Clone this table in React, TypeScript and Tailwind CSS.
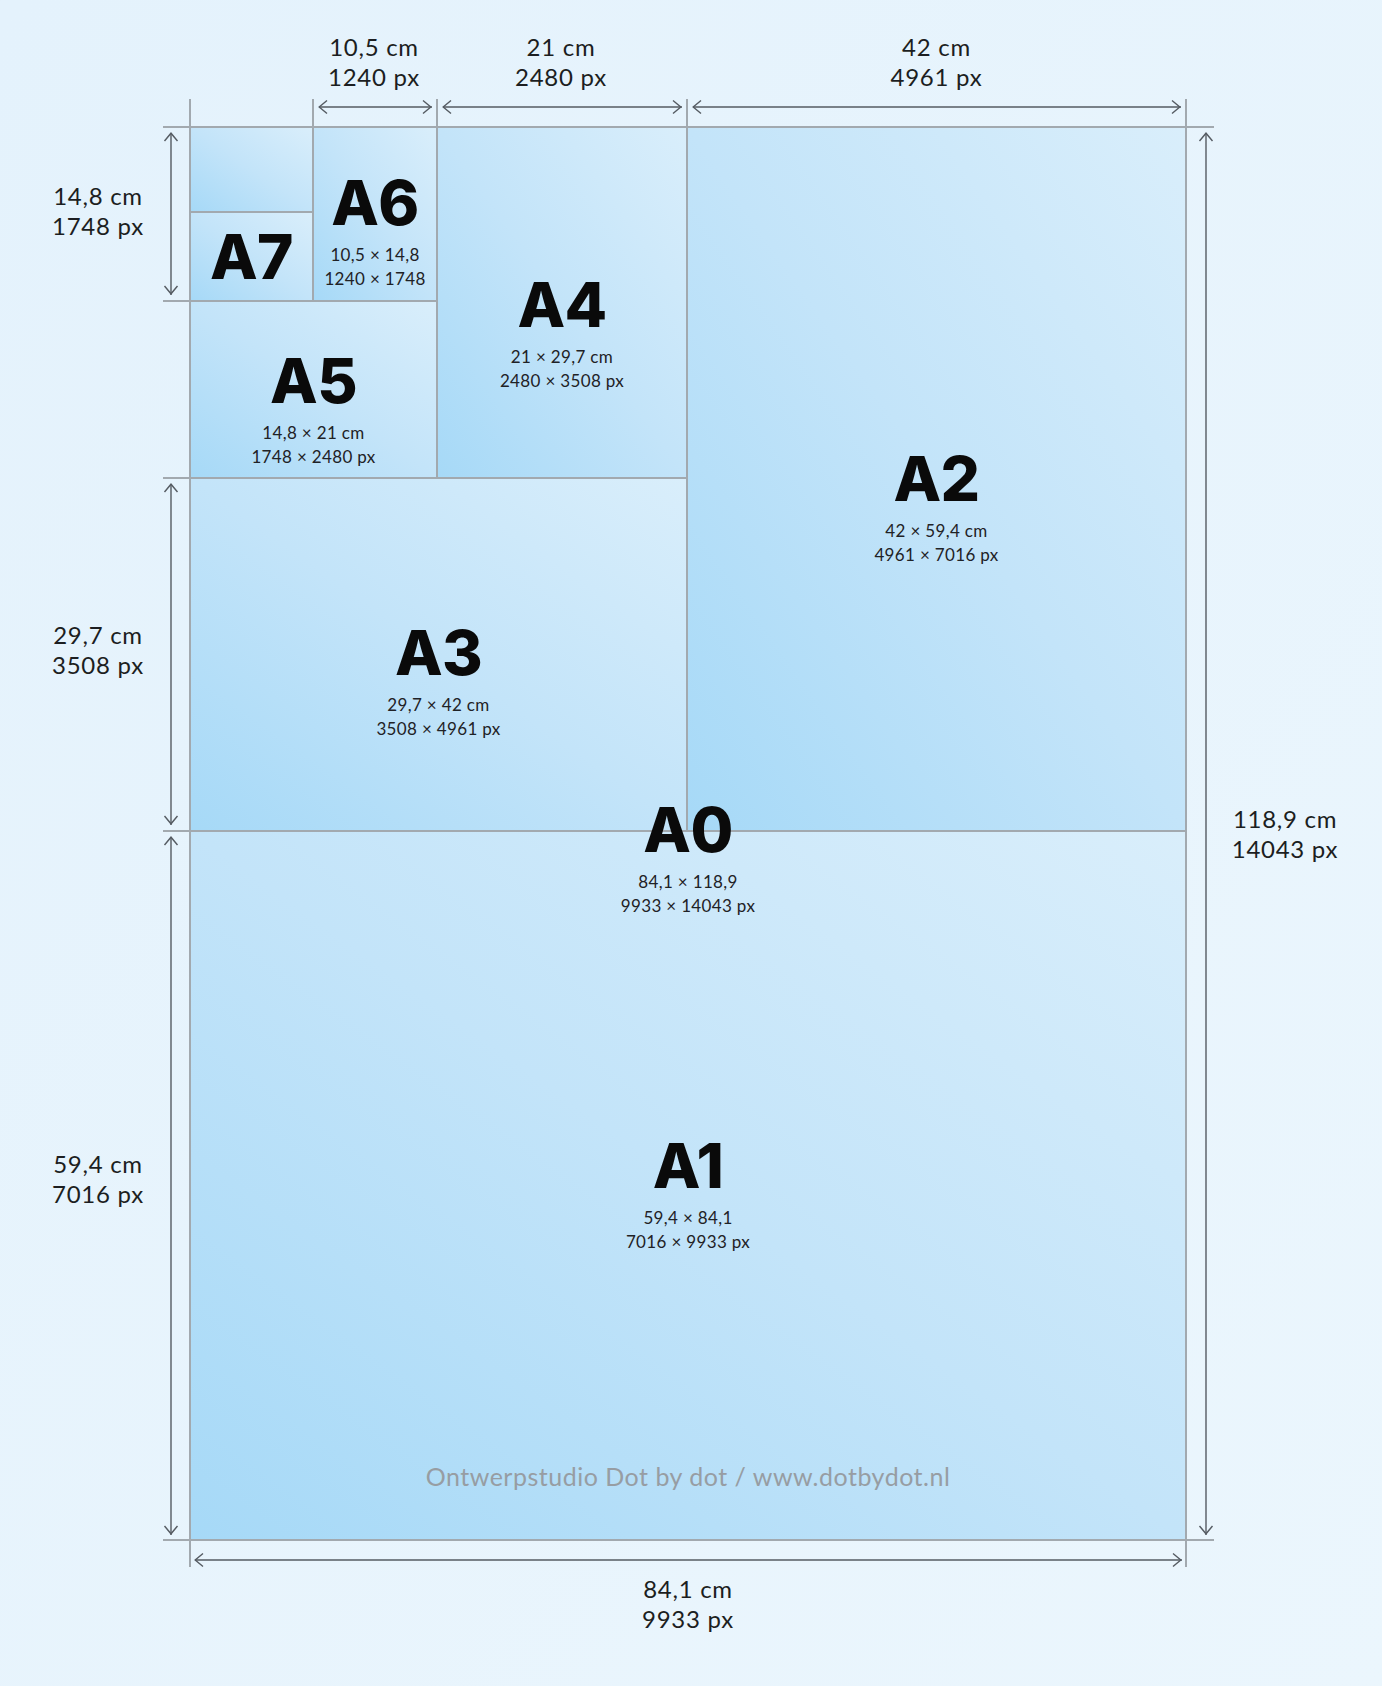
import type { ReactNode } from "react"

// A-series paper sizes chart

const ARROW = "#555b62"

function HArrow() {
  return (
    <svg className="block h-[16px] w-full overflow-visible">
      <line x1="1" y1="8" x2="100%" y2="8" stroke={ARROW} strokeWidth="1.4" />
      <polyline points="9,1.5 1.2,8 9,14.5" fill="none" stroke={ARROW} strokeWidth="1.4" />
      <svg x="100%" y="0" overflow="visible">
        <polyline points="-9,1.5 -1.2,8 -9,14.5" fill="none" stroke={ARROW} strokeWidth="1.4" />
      </svg>
    </svg>
  )
}

function VArrow() {
  return (
    <svg className="block min-h-0 w-[16px] flex-1 overflow-visible">
      <line x1="8" y1="1" x2="8" y2="100%" stroke={ARROW} strokeWidth="1.4" />
      <polyline points="1.5,9 8,1.2 14.5,9" fill="none" stroke={ARROW} strokeWidth="1.4" />
      <svg x="0" y="100%" overflow="visible">
        <polyline points="1.5,-9 8,-1.2 14.5,-9" fill="none" stroke={ARROW} strokeWidth="1.4" />
      </svg>
    </svg>
  )
}

function Label({ name }: { name: string }) {
  return (
    <div className="font-['Inter',sans-serif] text-[62px] leading-[62px] font-extrabold tracking-[-0.01em] text-[#0a0a0a]">
      {name}
    </div>
  )
}

function Sub({ a, b }: { a: string; b: string }) {
  return (
    <div className="mt-[9px] text-center text-[17px] leading-[23.5px] tracking-[0.02em] text-[#1f2226]">
      {a}
      <br />
      {b}
    </div>
  )
}

function Sheet({ className, children }: { className: string; children?: ReactNode }) {
  return (
    <div
      className={`flex flex-col items-center bg-linear-to-tr from-[#a6d9f7] via-[#c3e4f9] to-[#d9eefb] ${className}`}
    >
      {children}
    </div>
  )
}

function Dim({ a, b }: { a: string; b: string }) {
  return (
    <div className="text-center text-[24px] leading-[30px] tracking-[0.03em] whitespace-nowrap text-[#1c1e21]">
      {a}
      <br />
      {b}
    </div>
  )
}

export default function App() {
  return (
    <div className="grid h-[1686px] w-[1382px] grid-cols-[189px_998px_195px] grid-rows-[126px_1415px_145px] bg-linear-to-br from-[#e4f2fc] to-[#ebf6fd] font-['Lato',sans-serif]">
      {/* top dimensions */}
      <div />
      <div className="flex">
        <div className="flex w-[123px] flex-col justify-end">
          <div className="h-[27px] border-l-2 border-[#a2a9af]" />
        </div>
        <div className="flex w-[124px] flex-col justify-end">
          <div className="mb-[7px]">
            <Dim a="10,5 cm" b="1240 px" />
          </div>
          <div className="h-[27px] border-l-2 border-[#a2a9af] px-[4px]">
            <HArrow />
          </div>
        </div>
        <div className="flex w-[250px] flex-col justify-end">
          <div className="mb-[7px]">
            <Dim a="21 cm" b="2480 px" />
          </div>
          <div className="h-[27px] border-l-2 border-[#a2a9af] px-[4px]">
            <HArrow />
          </div>
        </div>
        <div className="flex w-[501px] flex-col justify-end">
          <div className="mb-[7px]">
            <Dim a="42 cm" b="4961 px" />
          </div>
          <div className="h-[27px] border-x-2 border-[#a2a9af] px-[4px]">
            <HArrow />
          </div>
        </div>
      </div>
      <div />

      {/* left dimensions */}
      <div className="flex flex-col">
        <div className="flex h-[174px]">
          <div className="flex w-[163px] items-center justify-center pb-[4px] pl-[33px]">
            <Dim a="14,8 cm" b="1748 px" />
          </div>
          <div className="flex w-[26px] flex-col border-t-2 border-[#a2a9af] pt-[4px] pb-[5px]">
            <VArrow />
          </div>
        </div>
        <div className="flex h-[177px]">
          <div className="w-[163px]" />
          <div className="w-[26px] border-t-2 border-[#a2a9af]" />
        </div>
        <div className="flex h-[353px]">
          <div className="flex w-[163px] items-center justify-center pb-[8px] pl-[33px]">
            <Dim a="29,7 cm" b="3508 px" />
          </div>
          <div className="flex w-[26px] flex-col border-t-2 border-[#a2a9af] pt-[4px] pb-[5px]">
            <VArrow />
          </div>
        </div>
        <div className="flex h-[711px]">
          <div className="flex w-[163px] items-center justify-center pb-[14px] pl-[33px]">
            <Dim a="59,4 cm" b="7016 px" />
          </div>
          <div className="flex w-[26px] flex-col border-y-2 border-[#a2a9af] pt-[4px] pb-[4px]">
            <VArrow />
          </div>
        </div>
      </div>

      {/* the sheet */}
      <div className="relative flex flex-col gap-[2px] bg-[#a2a9af] p-[2px]">
        <div className="flex h-[702px] gap-[2px]">
          <div className="flex w-[495px] flex-col gap-[2px]">
            <div className="flex h-[349px] gap-[2px]">
              <div className="flex w-[245px] flex-col gap-[2px]">
                <div className="flex h-[172px] gap-[2px]">
                  <div className="flex w-[121px] flex-col gap-[2px]">
                    <Sheet className="h-[83px]" />
                    <Sheet className="flex-1 justify-center">
                      <Label name="A7" />
                    </Sheet>
                  </div>
                  <Sheet className="flex-1 pt-[44px]">
                    <Label name="A6" />
                    <Sub a="10,5 × 14,8" b="1240 × 1748" />
                  </Sheet>
                </div>
                <Sheet className="flex-1 pt-[48px]">
                  <Label name="A5" />
                  <Sub a="14,8 × 21 cm" b="1748 × 2480 px" />
                </Sheet>
              </div>
              <Sheet className="flex-1 pt-[146px]">
                <Label name="A4" />
                <Sub a="21 × 29,7 cm" b="2480 × 3508 px" />
              </Sheet>
            </div>
            <Sheet className="flex-1 pt-[143px]">
              <Label name="A3" />
              <Sub a="29,7 × 42 cm" b="3508 × 4961 px" />
            </Sheet>
          </div>
          <Sheet className="flex-1 pt-[320px]">
            <Label name="A2" />
            <Sub a="42 × 59,4 cm" b="4961 × 7016 px" />
          </Sheet>
        </div>
        <Sheet className="flex-1 pt-[303px]">
          <Label name="A1" />
          <Sub a="59,4 × 84,1" b="7016 × 9933 px" />
          <div className="mt-auto pb-[48px] text-[25px] leading-[29px] tracking-[0.02em] text-[#979da3]">
            Ontwerpstudio Dot by dot / www.dotbydot.nl
          </div>
        </Sheet>

        <div className="absolute inset-x-0 top-[673px] flex flex-col items-center">
          <Label name="A0" />
          <Sub a="84,1 × 118,9" b="9933 × 14043 px" />
        </div>
      </div>

      {/* right dimension */}
      <div className="flex">
        <div className="flex w-[27px] flex-col border-y-2 border-[#a2a9af] py-[4px] pl-[11px]">
          <VArrow />
        </div>
        <div className="flex w-[142px] items-center justify-center">
          <Dim a="118,9 cm" b="14043 px" />
        </div>
      </div>

      {/* bottom dimension */}
      <div />
      <div className="flex flex-col">
        <div className="h-[26px] border-x-2 border-[#a2a9af] px-[3px] pt-[11px]">
          <HArrow />
        </div>
        <div className="mt-[7px]">
          <Dim a="84,1 cm" b="9933 px" />
        </div>
      </div>
      <div />
    </div>
  )
}
